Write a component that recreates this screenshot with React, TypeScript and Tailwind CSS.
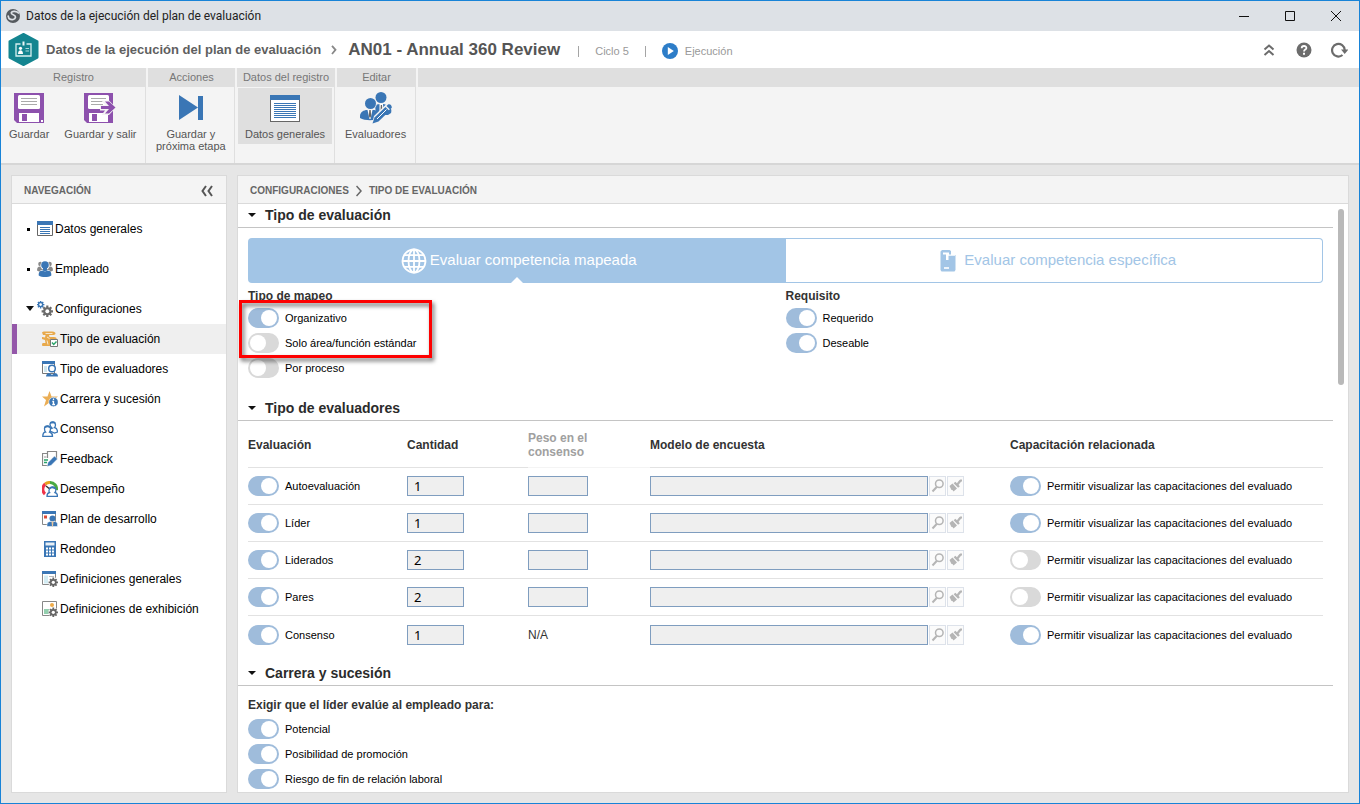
import { useId, type ReactNode } from "react";

const BLUE = "#3a76b5";
const GRAY = "#666666";
const PURPLE = "#8d51ad";

/* ---------- Ribbon icons ---------- */

function SaveIcon() {
  return (
    <svg width="32" height="32" viewBox="0 0 32 32" aria-hidden="true">
      <path d="M1 1h30v30H4l-3-3z" fill={PURPLE} />
      <rect x="5" y="3" width="22" height="14" rx="1.5" fill="#fff" />
      <path d="M8 6.5h16M8 9.5h16M8 12.500h16" stroke="#aaa" />
      <rect x="6" y="21" width="20" height="9" fill="#fff" />
      <rect x="9" y="22" width="5" height="7" fill={PURPLE} />
      <rect x="28" y="28" width="2" height="2" fill="#fff" />
    </svg>
  );
}

function SaveExitIcon() {
  return (
    <svg width="32" height="32" viewBox="0 0 32 32" aria-hidden="true">
      <path d="M0 1h29v30H3l-3-3z" fill={PURPLE} />
      <rect x="4" y="3" width="21" height="14" rx="1.500" fill="#fff" />
      <path d="M7 6.500h15M7 9.500h15M7 12.500h12" stroke="#aaa" />
      <rect x="5" y="21" width="19" height="9" fill="#fff" />
      <rect x="8" y="22" width="5" height="7" fill={PURPLE} />
      <path d="M16 13h5l-3.500-4.500h7.500l7 7-7 7.500h-7.500l3.500-4.500h-5z" fill="#f4f4f4" />
      <path d="M17 14h8l-4-4.500h4l6.500 6-6.500 6h-4l4-4.500h-8z" fill={PURPLE} />
    </svg>
  );
}

function NextStageIcon() {
  return (
    <svg width="32" height="32" viewBox="0 0 32 32" aria-hidden="true">
      <path d="M4 3l19 12.500L4 28zM23 4h5v24h-5z" fill={BLUE} />
    </svg>
  );
}

function SheetIcon() {
  return (
    <svg width="32" height="32" viewBox="0 0 32 32" aria-hidden="true">
      <rect x="1.500" y="3.500" width="29" height="26" fill="#fff" stroke={GRAY} />
      <rect x="1" y="3" width="30" height="5" fill={BLUE} />
      <path d="M5 11.500h22M5 13.500h22M5 15.500h22M5 17.500h22M5 19.500h22M5 21.500h22M5 23.500h22M5 25.500h22" stroke={BLUE} />
    </svg>
  );
}

function EvaluatorsIcon() {
  return (
    <svg width="32" height="32" viewBox="0 0 32 32" aria-hidden="true">
      <circle cx="21" cy="5.500" r="5.500" fill={BLUE} />
      <path d="M15 13c4-1.500 9-1.500 12 0 4 2 5 5 4 8l-3 2H16z" fill={BLUE} />
      <path d="M19.500 12h3.500l.5 8h-4z" fill="#fff" />
      <path d="M20.800 13h1.200l.5 6-1 1-1-1z" fill="#666" />
      <circle cx="10.500" cy="11.500" r="6.300" fill="#f4f4f4" />
      <circle cx="10.500" cy="11.500" r="5.500" fill={BLUE} />
      <path d="M0 24c0-4 4-6 7-6h6c4 0 7 2 7 6v2c-5 3-15 3-20 0z" fill={BLUE} />
      <path d="M7.500 18h5l-2 9h-1z" fill="#fff" />
      <path d="M9.300 18h1.400l.5 6-1.200 2-1.200-2z" fill="#666" />
      <path d="M12 32l2-8L28 10.500l4.500 4L18.500 29z" fill="#f4f4f4" />
      <path d="M12.500 31.500l2-6L25.500 15l4 4-11 10.500z" fill={BLUE} />
      <path d="M26.500 14l1.500-1.500c2-1 4 1 3.800 3.200L30 17.500z" fill={BLUE} />
      <path d="M17 27l9.500-9.500" stroke="#fff" />
    </svg>
  );
}

/* ---------- Navigation icons ---------- */

function Svg16({ children }: { children: ReactNode }) {
  return (
    <svg width="16" height="16" viewBox="0 0 16 16" className="shrink-0" aria-hidden="true">
      {children}
    </svg>
  );
}

function Gear({ cx, cy, r, color, hole = "#fff" }: { cx: number; cy: number; r: number; color: string; hole?: string }) {
  return (
    <g transform={`translate(${cx} ${cy}) scale(${r / 5})`}>
      <circle r="3.600" fill={color} />
      <path d="M0-5V5M-5 0H5M-3.500-3.500l7 7M3.500-3.500l-7 7" stroke={color} strokeWidth="1.900" />
      <circle r="1.700" fill={hole} />
    </g>
  );
}

const navIcons: Record<string, ReactNode> = {
  sheet: (
    <Svg16>
      <path d="M.5.500h15v14H.5z" fill="#fff" stroke={GRAY} />
      <path d="M0 0h16v4H0z" fill={BLUE} />
      <path d="M3 6.500h10M3 8.500h10M3 10.500h10M3 12.500h10" stroke={BLUE} />
    </Svg16>
  ),
  people: (
    <Svg16>
      <circle cx="3.500" cy="3" r="2.300" fill="#888" />
      <circle cx="12.500" cy="3" r="2.300" fill="#888" />
      <path d="M0 9.500C0 7 1 5.500 3 5.500h10c2 0 3 1.500 3 4l-2 1H2z" fill="#888" />
      <circle cx="8" cy="4.500" r="4.600" fill="#fff" />
      <path d="M3.500 9h9v3h-9z" fill="#fff" />
      <circle cx="8" cy="4" r="3.800" fill={BLUE} />
      <path d="M1.700 16v-3c0-2.500 2-3.500 4.300-3.500L8 11l2-1.500c2.500 0 4.300 1 4.300 3.500v1.500c-3 2-9.500 2-12.600 0z" fill={BLUE} />
      <path d="M6 7h4v2.500L8 11 6 9.500z" fill={BLUE} />
    </Svg16>
  ),
  gears: (
    <Svg16>
      <Gear cx={3.600} cy={3.600} r={3.800} color={BLUE} />
      <Gear cx={10.300} cy={10.300} r={5.700} color="#6b6b6b" />
    </Svg16>
  ),
  evalType: (
    <Svg16>
      <path d="M0 1.500C1 .3 2 .5 3 .5h7.500c3.500 0 4 3.500 1 3.500H7l.5 2H12c3 0 3.500 2.500 1 2.500H8V15H1c-1.500 0-1-3 0-3h2.500L3 9 0 8V6l3 .5L3.500 4H1z" fill="#e8a94b" />
      <path d="M3.500 2.500h7M5 6l2.500 1.500M5 9.500l1 4" stroke="#fbeed9" strokeWidth=".9" />
      <path d="M8.500 8.500h7v7h-7z" fill="#fff" stroke="#777" />
      <path d="M10 11.500l1.700 2 2.800-3" fill="none" stroke="#29a36a" strokeWidth="1.400" />
    </Svg16>
  ),
  evaluators: (
    <Svg16>
      <path d="M.5.500h12v12H.5z" fill="#fff" stroke="#777" />
      <path d="M2 5h3v6H2z" fill="#cfe6ee" />
      <path d="M0 0h13v3H0z" fill={BLUE} />
      <circle cx="10" cy="7.500" r="3.300" fill="#fff" stroke={BLUE} strokeWidth="1.500" />
      <path d="M4 15.500c0-2.500 2-3.500 3.500-3.500L10 14l2.500-2c2 0 3.500 1 3.500 3.500z" fill={BLUE} />
    </Svg16>
  ),
  star: (
    <Svg16>
      <path d="M7.500 0l2 5.500H16l-5 3.500 2 6-5.500-3.500L2 15.500l2-6.500L0 5.500h5.500z" fill="#ebae55" />
      <circle cx="11.500" cy="11" r="4.700" fill={BLUE} stroke="#fff" strokeWidth=".6" />
      <path d="M11.500 7.500v1.600M10.300 10.500h1.200V13.500M10.200 13.500h2.800" fill="none" stroke="#fff" strokeWidth="1.300" />
    </Svg16>
  ),
  consensus: (
    <Svg16>
      <g stroke={BLUE} strokeWidth="1.300" fill="#fff">
        <path d="M8 10c0-2 1-3 2-3-1-1-2-2-2-3.500C8 1.500 9 .8 10.500.8S13.500 2 13.500 4c0 1-.500 2-1 2.500 2 .500 3 2 3 4.500l-3 1z" />
        <path d="M.8 15.300c0-3.300 1-4 2.700-4.300C2.500 10 2.500 9 2.500 7.800 2.500 5.800 3.800 5 5.500 5s3 1 3 3c0 1-.300 2-1 3 2 .500 3 1.500 3 4.300z" />
      </g>
      <path d="M3 6.500c1-1.500 4-1.500 5 0M9 2.200c1-1 3-1 4 0" stroke={BLUE} strokeWidth="1.800" fill="none" />
    </Svg16>
  ),
  feedback: (
    <Svg16>
      <path d="M5 2.500H.5v12H6M5.500 7V.5h9v7H10" fill="none" stroke="#888" strokeWidth="1.200" />
      <path d="M2 6h2.500" stroke="#999" />
      <path d="M2 9h4M2 11.500h3" stroke="#29a36a" strokeWidth="1.300" />
      <path d="M5 15.500l1-4 6.500-6.500 3 3L9 14.500z" fill={BLUE} stroke="#fff" strokeWidth=".5" />
    </Svg16>
  ),
  performance: (
    <Svg16>
      <path d="M3 13A6.500 6.500 0 0 1 3.300 3" stroke="#ef3348" strokeWidth="3" fill="none" />
      <path d="M3.300 3A6.500 6.500 0 0 1 8 1.500" stroke="#e7a21f" strokeWidth="3" fill="none" />
      <path d="M8 1.500A6.500 6.500 0 0 1 14.500 9" stroke="#49a942" strokeWidth="3" fill="none" />
      <path d="M4 5l5 4" stroke="#333" strokeWidth="1.500" />
      <path d="M5 15.300c0-3 1-3.500 2.500-3.800C6.500 10.500 7 6 10.500 6s4 3.500 2.500 5.500c2 .300 2.500 1.500 2.500 3.800z" fill="#fff" stroke={BLUE} strokeWidth="1.300" />
      <path d="M7.500 7.500c1-1.500 4-1.500 5.500 0" stroke={BLUE} strokeWidth="1.800" fill="none" />
    </Svg16>
  ),
  plan: (
    <Svg16>
      <path d="M.5.500h13v13H.5z" fill="#fff" stroke="#888" />
      <path d="M0 0h14v3H0z" fill={BLUE} />
      <path d="M2 4.500h3v3H2z" fill="#dd4a35" />
      <circle cx="10.500" cy="7.500" r="3" fill={BLUE} />
      <path d="M5 15.500V13c0-1.500 2-2.500 3.500-2.500h4c1.500 0 3 1 3 2.500v2.500z" fill={BLUE} stroke="#fff" strokeWidth=".5" />
      <path d="M9.500 10.500h2l-.5 5h-1z" fill="#e9c79d" />
    </Svg16>
  ),
  calculator: (
    <Svg16>
      <path d="M2 0h12v16H2z" fill={BLUE} />
      <path d="M3.500 1.500h9v3h-9z" fill="#e9f0f6" />
      <path d="M4 7.500h8M4 10.500h8M4 13.500h8" stroke="#fff" strokeWidth="2" strokeDasharray="2 1" />
    </Svg16>
  ),
  general: (
    <Svg16>
      <path d="M.5.500h13v13H.5z" fill="#fff" stroke="#888" />
      <path d="M2 4.500h4v8H2z" fill="#d3ecf3" />
      <path d="M7 5.500h5" stroke="#bbb" />
      <path d="M0 0h14v3H0z" fill={BLUE} />
      <circle cx="11.300" cy="11.300" r="5" fill="#fff" />
      <Gear cx={11.300} cy={11.300} r={4.700} color="#666" />
    </Svg16>
  ),
  display: (
    <Svg16>
      <path d="M.5.500h14v14H.5z" fill="#fff" stroke="#888" />
      <circle cx="10" cy="4" r="2" fill="#efab48" />
      <path d="M2 8h6v5H2z" fill="#93cfae" />
      <circle cx="11.300" cy="11.300" r="5" fill="#fff" />
      <Gear cx={11.300} cy={11.300} r={4.700} color="#666" />
    </Svg16>
  ),
};

/* ---------- Shared controls ---------- */

function Toggle({ label, on = true }: { label: string; on?: boolean }) {
  const id = useId();
  return (
    <div className="flex h-[25px] items-center gap-[6px]">
      <input
        id={id}
        type="checkbox"
        defaultChecked={on}
        className="flex h-5 w-[31px] shrink-0 appearance-none items-center rounded-full bg-[#d9d9d9] before:ml-[2px] before:block before:size-4 before:rounded-full before:bg-white checked:bg-[#9fbcdb] checked:before:ml-[13px]"
      />
      <label htmlFor={id} className="text-[11px] leading-4 text-black">
        {label}
      </label>
    </div>
  );
}

function SectionTitle({ children }: { children: ReactNode }) {
  return (
    <h2 className="flex h-6 items-center gap-[9px] border-b border-[#c4c4c4] pl-[10px] text-[14px] font-bold text-[#2b2b2b]">
      <svg width="8" height="6" viewBox="0 0 8 6" aria-hidden="true">
        <path d="M0 0h8L4 4z" fill="#111" />
      </svg>
      {children}
    </h2>
  );
}

function RibbonGroup({ title, width, children }: { title: string; width: string; children: ReactNode }) {
  return (
    <section className={`mr-[2px] flex shrink-0 flex-col ${width}`}>
      <h2 className="h-[19px] bg-[#dfdfdf] text-center text-[11px] leading-[18px] text-[#777]">{title}</h2>
      <div className="flex flex-1 items-start gap-px border-r border-[#dfdfdf] pt-px pl-px">{children}</div>
    </section>
  );
}

function RibbonButton({ icon, active, children }: { icon: ReactNode; active?: boolean; children: ReactNode }) {
  return (
    <button
      type="button"
      className={`flex flex-col items-center gap-1 px-[7px] py-1 text-[11px] leading-3 whitespace-nowrap text-[#555] ${active ? "bg-[#dfdfdf]" : ""}`}
    >
      {icon}
      <span>{children}</span>
    </button>
  );
}

/* ---------- Data ---------- */

const mainNav = [
  { icon: "sheet", label: "Datos generales" },
  { icon: "people", label: "Empleado" },
];

const subNav = [
  { icon: "evalType", label: "Tipo de evaluación", active: true },
  { icon: "evaluators", label: "Tipo de evaluadores" },
  { icon: "star", label: "Carrera y sucesión" },
  { icon: "consensus", label: "Consenso" },
  { icon: "feedback", label: "Feedback" },
  { icon: "performance", label: "Desempeño" },
  { icon: "plan", label: "Plan de desarrollo" },
  { icon: "calculator", label: "Redondeo" },
  { icon: "general", label: "Definiciones generales" },
  { icon: "display", label: "Definiciones de exhibición" },
];

const evaluations = [
  { name: "Autoevaluación", amount: 1, weight: true, training: true },
  { name: "Líder", amount: 1, weight: true, training: true },
  { name: "Liderados", amount: 2, weight: true, training: false },
  { name: "Pares", amount: 2, weight: true, training: false },
  { name: "Consenso", amount: 1, weight: false, training: true },
];

/* ---------- Page parts ---------- */

function TitleBar() {
  return (
    <div className="flex h-[30px] shrink-0 items-center bg-[#dde1e6] pl-[5px]">
      <svg width="14" height="14" viewBox="0 0 14 14" aria-hidden="true">
        <circle cx="7" cy="7" r="7" fill="#555a5f" />
        <path d="M13 4.500C11 2 6 1.500 5.300 3.800 5 6 9.800 5.500 9.500 8.200 9.200 10.500 6 11.500 3 9.500L2 6.500" fill="none" stroke="#dde1e6" strokeWidth="1.700" />
      </svg>
      <span className="ml-[6px] font-['Roboto','Noto_Sans',sans-serif] text-[12px] text-[#222]">
        Datos de la ejecución del plan de evaluación
      </span>
      <div className="ml-auto flex">
        <button type="button" aria-label="Minimizar" className="flex h-[30px] w-[46px] items-center justify-center">
          <svg width="12" height="12" viewBox="0 0 12 12"><path d="M1 6.500h10" stroke="#111" /></svg>
        </button>
        <button type="button" aria-label="Maximizar" className="flex h-[30px] w-[46px] items-center justify-center">
          <svg width="12" height="12" viewBox="0 0 12 12"><path d="M1.500 1.500h9v9h-9z" fill="none" stroke="#111" /></svg>
        </button>
        <button type="button" aria-label="Cerrar" className="flex h-[30px] w-[46px] items-center justify-center">
          <svg width="12" height="12" viewBox="0 0 12 12"><path d="M1 1l10 10M11 1L1 11" stroke="#111" /></svg>
        </button>
      </div>
    </div>
  );
}

function Header() {
  return (
    <header className="flex h-[37px] shrink-0 items-center bg-white pr-[11px] pl-[7px]">
      <svg width="31" height="33" viewBox="0 0 31 33" aria-hidden="true">
        <path d="M15.500 1L29.500 8.500v16L15.500 32 1.500 24.500v-16z" fill="#148590" stroke="#148590" strokeWidth="2" strokeLinejoin="round" />
        <path d="M12.500 11H8v12h15V11h-4.500" fill="none" stroke="#d7f0f0" strokeWidth="1.300" />
        <path d="M14.500 8.500h2v4h-2z" fill="#e8f7f7" />
        <circle cx="12.500" cy="15.300" r="1.600" fill="#fff" />
        <path d="M10 21c0-2.500 1-3.800 2.500-3.800S15 18.500 15 21z" fill="#fff" />
        <path d="M17.500 15.500h3.500M17.500 18h3.500" stroke="#a9d8da" />
      </svg>
      <h1 className="flex items-center pl-[7px] font-bold text-[#5f5f5f]">
        <span className="pt-px text-[13px]">Datos de la ejecución del plan de evaluación</span>
        <svg width="6" height="10" viewBox="0 0 6 10" className="mr-[11px] ml-[10px]" aria-hidden="true">
          <path d="M1 .8l3.500 4L1 9" fill="none" stroke="#888" strokeWidth="1.800" />
        </svg>
        <span className="text-[17px] text-[#555]">AN01 - Annual 360 Review</span>
      </h1>
      <div className="flex items-center pt-[3px] pl-[18px] text-[11px] text-[#999]">
        <span className="h-[11px] w-px bg-[#a5a5a5]" />
        <span className="px-4">Ciclo 5</span>
        <span className="mr-4 h-[11px] w-px bg-[#a5a5a5]" />
        <svg width="16" height="16" viewBox="0 0 16 16" aria-hidden="true">
          <circle cx="8" cy="8" r="8" fill="#2d7dc8" />
          <path d="M5.800 4l6 4-6 4z" fill="#fff" />
        </svg>
        <span className="pl-[7px]">Ejecución</span>
      </div>
      <div className="ml-auto flex items-center gap-[18px]">
        <button type="button" aria-label="Contraer cinta">
          <svg width="18" height="16" viewBox="0 0 18 16">
            <path d="M4.500 7.500L9 3.500l4.500 4M4.500 13L9 9l4.500 4" fill="none" stroke="#6c6c6c" strokeWidth="2" />
          </svg>
        </button>
        <button type="button" aria-label="Ayuda">
          <svg width="16" height="16" viewBox="0 0 16 16">
            <circle cx="8" cy="8" r="7.500" fill="#6c6c6c" />
            <path d="M5.700 6.300c0-3 4.700-3 4.700-.300C10.400 7.700 8 7.500 8 9.500" fill="none" stroke="#fff" strokeWidth="1.800" />
            <path d="M7 10.800h2v1.900H7z" fill="#fff" />
          </svg>
        </button>
        <button type="button" aria-label="Actualizar">
          <svg width="18" height="16" viewBox="0 0 18 16">
            <path d="M12.500 13A6.300 6.300 0 1 1 14.700 8" fill="none" stroke="#6c6c6c" strokeWidth="2.200" />
            <path d="M11 7.500h7.500L14.700 12z" fill="#6c6c6c" />
          </svg>
        </button>
      </div>
    </header>
  );
}

function Ribbon() {
  return (
    <div className="flex h-[97px] shrink-0 border-b-2 border-[#d6d6d6] bg-[#f4f4f4]">
      <RibbonGroup title="Registro" width="w-[145px]">
        <RibbonButton icon={<SaveIcon />}>Guardar</RibbonButton>
        <RibbonButton icon={<SaveExitIcon />}>Guardar y salir</RibbonButton>
      </RibbonGroup>
      <RibbonGroup title="Acciones" width="w-[87px]">
        <RibbonButton icon={<NextStageIcon />}>
          Guardar y<br />próxima etapa
        </RibbonButton>
      </RibbonGroup>
      <RibbonGroup title="Datos del registro" width="w-[98px]">
        <RibbonButton icon={<SheetIcon />} active>Datos generales</RibbonButton>
      </RibbonGroup>
      <RibbonGroup title="Editar" width="w-[79px]">
        <RibbonButton icon={<EvaluatorsIcon />}>Evaluadores</RibbonButton>
      </RibbonGroup>
      <div className="h-[19px] flex-1 bg-[#dfdfdf]" />
    </div>
  );
}

function Sidebar() {
  return (
    <nav className="flex w-[216px] shrink-0 flex-col border border-[#dadada] bg-white text-[12px] text-black">
      <div className="flex h-7 shrink-0 items-center justify-between border-b border-[#dadada] bg-[#f4f4f4] px-3 pt-[2px]">
        <h2 className="text-[10px] font-bold text-[#666]">NAVEGACIÓN</h2>
        <button type="button" aria-label="Contraer navegación">
          <svg width="14" height="12" viewBox="0 0 14 12">
            <path d="M6 1L2.500 6 6 11M12 1L8.500 6l3.500 5" fill="none" stroke="#555" strokeWidth="2" />
          </svg>
        </button>
      </div>
      <ul className="pt-[5px]">
        {mainNav.map((item) => (
          <li key={item.label}>
            <a href="#" className="flex h-10 items-center pl-[15px]">
              <span className="mr-[7px] size-[3px] bg-black" />
              {navIcons[item.icon]}
              <span className="pl-[2px]">{item.label}</span>
            </a>
          </li>
        ))}
        <li>
          <a href="#" className="flex h-[35px] items-center pt-1 pl-[14px]">
            <svg width="8" height="5" viewBox="0 0 8 5" className="mr-[3px]" aria-hidden="true">
              <path d="M0 0h8L4 5z" fill="#111" />
            </svg>
            {navIcons.gears}
            <span className="pl-[2px]">Configuraciones</span>
          </a>
          <ul>
            {subNav.map((item) => (
              <li key={item.label}>
                <a
                  href="#"
                  className={`flex h-[30px] items-center border-l-[5px] pl-[25px] ${item.active ? "border-[#9457a9] bg-[#efefef]" : "border-transparent"}`}
                >
                  {navIcons[item.icon]}
                  <span className="pl-[2px]">{item.label}</span>
                </a>
              </li>
            ))}
          </ul>
        </li>
      </ul>
    </nav>
  );
}

function EvaluatorsTable() {
  const th = "border-b border-[#e2e2e2] px-0 pt-[2px] pb-0 text-left align-middle font-bold";
  return (
    <table className="w-full table-fixed border-separate border-spacing-0 text-[12px] text-[#333]">
      <colgroup>
        <col className="w-[159px]" />
        <col className="w-[121px]" />
        <col className="w-[122px]" />
        <col className="w-[360px]" />
        <col />
      </colgroup>
      <thead>
        <tr className="h-[47px]">
          <th className={th}>Evaluación</th>
          <th className={th}>Cantidad</th>
          <th className="border-b border-[#f4f4f4] px-0 pt-[2px] pb-0 text-left leading-[14px] font-bold text-[#a0a0a0]">
            Peso en el<br />consenso
          </th>
          <th className={th}>Modelo de encuesta</th>
          <th className={th}>Capacitación relacionada</th>
        </tr>
      </thead>
      <tbody className="[&>tr:not(:last-child)>td]:border-b [&>tr>td]:border-[#e2e2e2] [&>tr>td]:p-0">
        {evaluations.map((row) => (
          <tr key={row.name} className="h-[37px]">
            <td><Toggle label={row.name} /></td>
            <td>
              <input
                aria-label={`Cantidad: ${row.name}`}
                defaultValue={row.amount}
                className="block h-5 w-[57px] border border-[#7f9dbf] bg-[#efefef] pl-[6px] font-['Noto_Sans','Open_Sans',sans-serif] text-[13px] text-black"
              />
            </td>
            <td>
              {row.weight ? (
                <input aria-label={`Peso: ${row.name}`} className="block h-5 w-[60px] border border-[#7f9dbf] bg-[#efefef] px-1" />
              ) : (
                "N/A"
              )}
            </td>
            <td>
              <div className="flex gap-px">
                <input aria-label={`Modelo de encuesta: ${row.name}`} className="h-5 w-[278px] border border-[#7f9dbf] bg-[#efefef] px-1" />
                <button type="button" aria-label="Buscar" className="flex h-5 w-[17px] items-center justify-center border border-[#dde2ea] bg-[#fbfbfb]">
                  <svg width="14" height="16" viewBox="0 0 14 16">
                    <circle cx="8.300" cy="5.800" r="3.800" fill="none" stroke="#b5b5b5" strokeWidth="1.500" />
                    <path d="M5.700 9L1.500 13.500" stroke="#b5b5b5" strokeWidth="2" />
                  </svg>
                </button>
                <button type="button" aria-label="Limpiar" className="flex h-5 w-[17px] items-center justify-center border border-[#dde2ea] bg-[#fbfbfb]">
                  <svg width="14" height="16" viewBox="0 0 14 16">
                    <path d="M.5 8l3-2.500L8 10.500 4.500 13.500 3.500 12 2.500 12z" fill="#b5b5b5" />
                    <path d="M5.500 4.500l4.500 4.500" stroke="#b5b5b5" strokeWidth="2.400" />
                    <path d="M8 7l3.500-4.500" stroke="#b5b5b5" strokeWidth="2.200" />
                    <path d="M11 1.500h2v2h-2z" fill="#b5b5b5" />
                  </svg>
                </button>
              </div>
            </td>
            <td><Toggle label="Permitir visualizar las capacitaciones del evaluado" on={row.training} /></td>
          </tr>
        ))}
      </tbody>
    </table>
  );
}

function MainPanel() {
  return (
    <main className="flex min-w-0 flex-1 flex-col border border-[#dadada] bg-white">
      <div className="flex h-7 shrink-0 items-center gap-[7px] border-b border-[#dadada] bg-[#f4f4f4] pt-[2px] pl-3 text-[10px] font-bold text-[#666]">
        <span>CONFIGURACIONES</span>
        <svg width="6" height="12" viewBox="0 0 6 12" aria-hidden="true">
          <path d="M.5 1L5 6 .5 11" fill="none" stroke="#666" strokeWidth="1.500" />
        </svg>
        <span>TIPO DE EVALUACIÓN</span>
      </div>
      <div className="flex min-h-0 flex-1 overflow-hidden">
        <div className="min-w-0 flex-1">
          <SectionTitle>Tipo de evaluación</SectionTitle>
          <div className="px-[10px] pt-[10px] pb-[17px]">
            <div role="tablist" className="grid h-[45px] grid-cols-2 text-[15px]">
              <button type="button" role="tab" aria-selected="true" className="relative flex items-center justify-center gap-[3px] rounded-l bg-[#a2c5e6] pl-1 text-white">
                <svg width="26" height="26" viewBox="0 0 26 26" aria-hidden="true">
                  <g fill="none" stroke="#fff" strokeWidth="1.800">
                    <circle cx="13" cy="13" r="11.500" />
                    <ellipse cx="13" cy="13" rx="5.500" ry="11.500" />
                    <path d="M13 1.500v23M1.500 13h23M3 7.200h20M3 18.800h20" />
                  </g>
                </svg>
                Evaluar competencia mapeada
                <svg width="12" height="6" viewBox="0 0 12 6" className="absolute bottom-0 left-1/2 -translate-x-1/2" aria-hidden="true">
                  <path d="M0 6l6-6 6 6z" fill="#fff" />
                </svg>
              </button>
              <button type="button" role="tab" aria-selected="false" className="flex items-center justify-center gap-[7px] rounded-r border border-l-0 border-[#a2c5e6] pl-2 text-[#a2c5e6]">
                <svg width="18" height="22" viewBox="0 0 18 22" aria-hidden="true">
                  <path d="M3 0h7.500l1.500 1v4h4.500v15l-1 1.500h-13L1.500 20V1.500z" fill="#a2c5e6" />
                  <path d="M4 2.500h6v2h6v1.200H9.500v4.300H7V4.500H4z" fill="#fff" />
                  <path d="M5 18h5" stroke="#fff" strokeWidth="1.600" />
                </svg>
                Evaluar competencia específica
              </button>
            </div>
            <div className="grid grid-cols-2 pt-[5px]">
              <div role="group" aria-labelledby="mapping-title" className="relative">
                <h3 id="mapping-title" className="mb-px text-[12px] leading-4 font-bold text-[#333]">Tipo de mapeo</h3>
                <Toggle label="Organizativo" />
                <Toggle label="Solo área/función estándar" on={false} />
                <Toggle label="Por proceso" on={false} />
                <div className="pointer-events-none absolute top-3 -left-[9px] h-[58px] w-[193px] border-[3px] border-[#fe0000] drop-shadow-[2px_3px_2px_rgba(0,0,0,0.6)]" />
              </div>
              <div role="group" aria-labelledby="requirement-title">
                <h3 id="requirement-title" className="mb-px text-[12px] leading-4 font-bold text-[#333]">Requisito</h3>
                <Toggle label="Requerido" />
                <Toggle label="Deseable" />
              </div>
            </div>
          </div>

          <SectionTitle>Tipo de evaluadores</SectionTitle>
          <div className="px-[10px] pb-[9px]">
            <EvaluatorsTable />
          </div>

          <SectionTitle>Carrera y sucesión</SectionTitle>
          <div role="group" aria-labelledby="career-title" className="px-[10px] pt-[11px]">
            <h3 id="career-title" className="mb-[3px] text-[12px] leading-4 font-bold text-[#333]">
              Exigir que el líder evalúe al empleado para:
            </h3>
            <Toggle label="Potencial" />
            <Toggle label="Posibilidad de promoción" />
            <Toggle label="Riesgo de fin de relación laboral" />
          </div>
        </div>
        <div className="w-[15px] shrink-0 pt-[5px] pl-[5px]">
          <div className="h-44 w-[6px] rounded-full bg-[#b9b9b9]" />
        </div>
      </div>
    </main>
  );
}

export default function App() {
  return (
    <div className="flex h-screen flex-col overflow-hidden border border-[#1883d7] bg-[#e6e6e6] font-['Liberation_Sans',Arial,sans-serif]">
      <TitleBar />
      <Header />
      <Ribbon />
      <div className="flex min-h-0 flex-1 gap-[10px] p-[10px]">
        <Sidebar />
        <MainPanel />
      </div>
    </div>
  );
}
